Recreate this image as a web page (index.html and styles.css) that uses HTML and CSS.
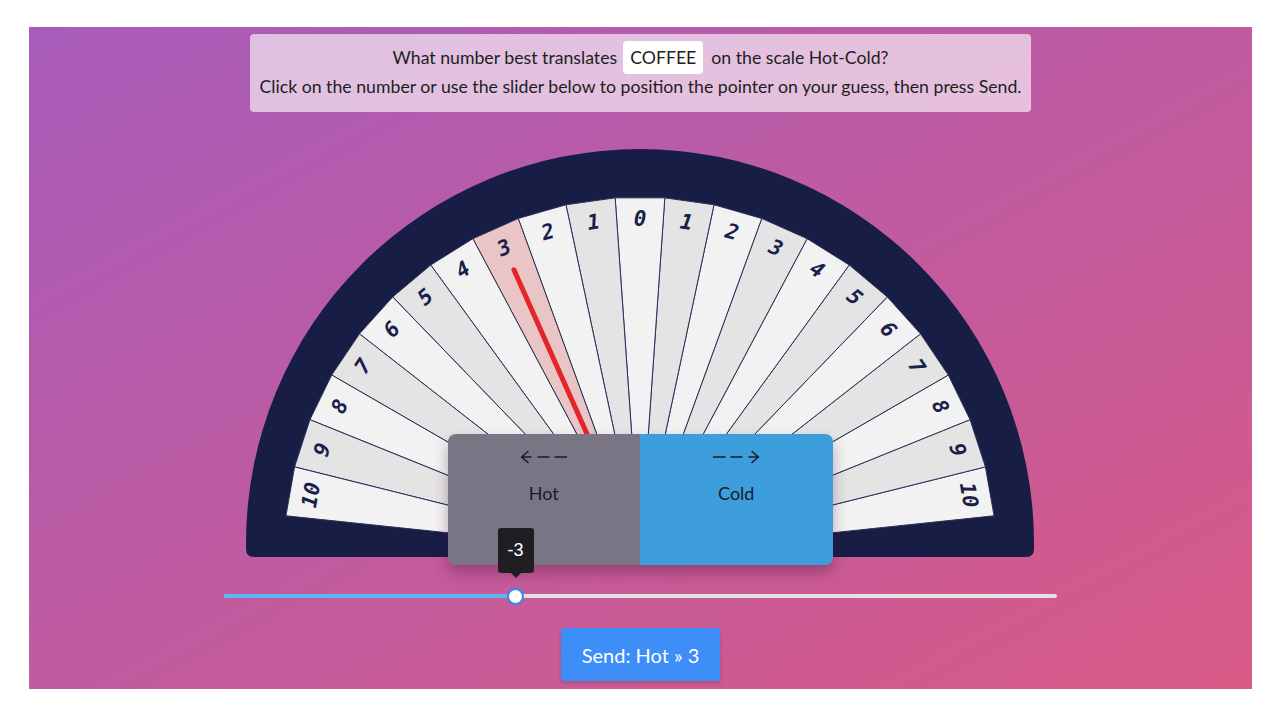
FILE: index.html
```html
<!DOCTYPE html>
<html lang="en">
<head>
<meta charset="utf-8">
<title>Hot-Cold scale</title>
<link rel="stylesheet" href="styles.css">
</head>
<body>
<div class="stage">
  <div class="prompt">
    <p class="line line-first"><span>What number best translates</span><span class="word">COFFEE</span><span>on the scale Hot-Cold?</span></p>
    <p class="line">Click on the number or use the slider below to position the pointer on your guess, then press Send.</p>
  </div>

  <div class="wheel">
    <svg class="dial" width="790" height="410" viewBox="0 0 790 410">
      <path class="rim" d="M0,395 A394,394 0 0 1 788,395 L788,401 Q788,409 780,409 L8,409 Q0,409 0,401 Z"/>
      <g class="wedges">
        <polygon class="w-light" points="394,405 748.05,367.79 739.43,318.88"/>
        <polygon class="w-dark" points="394,405 739.43,318.88 724.08,271.64"/>
        <polygon class="w-light" points="394,405 724.08,271.64 702.31,227"/>
        <polygon class="w-dark" points="394,405 702.31,227 674.53,185.83"/>
        <polygon class="w-light" points="394,405 674.53,185.83 641.30,148.91"/>
        <polygon class="w-dark" points="394,405 641.30,148.91 603.25,116.99"/>
        <polygon class="w-light" points="394,405 603.25,116.99 561.13,90.67"/>
        <polygon class="w-dark" points="394,405 561.13,90.67 515.76,70.47"/>
        <polygon class="w-light" points="394,405 515.76,70.47 468.02,56.78"/>
        <polygon class="w-dark" points="394,405 468.02,56.78 418.83,49.87"/>
        <polygon class="w-light" points="394,405 418.83,49.87 369.17,49.87"/>
        <polygon class="w-dark" points="394,405 369.17,49.87 319.98,56.78"/>
        <polygon class="w-light" points="394,405 319.98,56.78 272.24,70.47"/>
        <polygon class="w-pick" points="394,405 272.24,70.47 226.87,90.67"/>
        <polygon class="w-light" points="394,405 226.87,90.67 184.75,116.99"/>
        <polygon class="w-dark" points="394,405 184.75,116.99 146.70,148.91"/>
        <polygon class="w-light" points="394,405 146.70,148.91 113.47,185.83"/>
        <polygon class="w-dark" points="394,405 113.47,185.83 85.69,227"/>
        <polygon class="w-light" points="394,405 85.69,227 63.92,271.64"/>
        <polygon class="w-dark" points="394,405 63.92,271.64 48.57,318.88"/>
        <polygon class="w-light" points="394,405 48.57,318.88 39.95,367.79"/>
      </g>
      <g class="nums">
        <text x="722.93" y="347" transform="rotate(80 722.93 347)">10</text>
        <text x="711.65" y="301.79" transform="rotate(72 711.65 301.79)">9</text>
        <text x="694.20" y="258.58" transform="rotate(64 694.20 258.58)">8</text>
        <text x="670.90" y="218.23" transform="rotate(56 670.90 218.23)">7</text>
        <text x="642.21" y="181.51" transform="rotate(48 642.21 181.51)">6</text>
        <text x="608.69" y="149.14" transform="rotate(40 608.69 149.14)">5</text>
        <text x="570.99" y="121.75" transform="rotate(32 570.99 121.75)">4</text>
        <text x="529.85" y="99.87" transform="rotate(24 529.85 99.87)">3</text>
        <text x="486.06" y="83.94" transform="rotate(16 486.06 83.94)">2</text>
        <text x="440.48" y="74.25" transform="rotate(8 440.48 74.25)">1</text>
        <text x="394" y="71">0</text>
        <text x="347.52" y="74.25" transform="rotate(-8 347.52 74.25)">1</text>
        <text x="301.94" y="83.94" transform="rotate(-16 301.94 83.94)">2</text>
        <text x="258.15" y="99.87" transform="rotate(-24 258.15 99.87)">3</text>
        <text x="217.01" y="121.75" transform="rotate(-32 217.01 121.75)">4</text>
        <text x="179.31" y="149.14" transform="rotate(-40 179.31 149.14)">5</text>
        <text x="145.79" y="181.51" transform="rotate(-48 145.79 181.51)">6</text>
        <text x="117.10" y="218.23" transform="rotate(-56 117.10 218.23)">7</text>
        <text x="93.80" y="258.58" transform="rotate(-64 93.80 258.58)">8</text>
        <text x="76.35" y="301.79" transform="rotate(-72 76.35 301.79)">9</text>
        <text x="65.07" y="347" transform="rotate(-80 65.07 347)">10</text>
      </g>
      <line class="needle" x1="394" y1="405" x2="267.91" y2="121.8"/>
    </svg>

    <div class="poles">
      <div class="pole pole-hot">
        <svg class="arrow" width="48" height="14" viewBox="0 0 48 14">
          <path d="M8 1.5 L1.5 7 L8 12.5 M1.5 7 H11 M18 7 H29 M35 7 H46.5"/>
        </svg>
        <span class="pole-label">Hot</span>
      </div>
      <div class="pole pole-cold">
        <svg class="arrow" width="48" height="14" viewBox="0 0 48 14">
          <path d="M1.5 7 H13 M19 7 H30 M37 7 H46.5 M40 1.5 L46.5 7 L40 12.5"/>
        </svg>
        <span class="pole-label">Cold</span>
      </div>
    </div>
  </div>

  <div class="slider">
    <div class="track"><div class="fill" style="width:35%"></div></div>
    <div class="thumb" style="left:35%"></div>
    <div class="tip" style="left:35%">-3</div>
  </div>

  <button class="send" type="button">Send: Hot » 3</button>
</div>
</body>
</html>
```

FILE: styles.css
```css
* {
  box-sizing: border-box;
}

body {
  margin: 0;
  background: #ffffff;
  font-family: Lato, "Open Sans", sans-serif;
}

.stage {
  margin: 27px 0 0 29px;
  width: 1223px;
  height: 662px;
  background: linear-gradient(to bottom right, #a85cba, #d85a86);
  display: flex;
  flex-direction: column;
  align-items: center;
}

.prompt {
  margin-top: 7px;
  width: 781px;
  height: 78px;
  padding-top: 7px;
  background: rgba(255, 255, 255, 0.62);
  border-radius: 4px;
  display: flex;
  flex-direction: column;
  align-items: center;
}

.line {
  margin: 0;
  font-size: 17.7px;
  line-height: 26px;
  color: #1e1e22;
}

.line-first {
  display: flex;
  align-items: center;
  height: 33px;
}

.word {
  background: #ffffff;
  border-radius: 4px;
  padding: 0 7px;
  margin: 0 8px 0 6px;
  line-height: 33px;
  font-size: 17.7px;
}

.wheel {
  position: relative;
  width: 790px;
  height: 410px;
  margin-top: 36px;
}

.dial {
  display: block;
}

.rim {
  fill: #181d46;
}

.wedges polygon {
  stroke: #2c3058;
  stroke-width: 1;
}

.w-light {
  fill: #f2f2f2;
}

.w-dark {
  fill: #e4e4e4;
}

.w-pick {
  fill: #e9c5c5;
}

.nums text {
  font-family: "DejaVu Sans Mono", "Liberation Mono", monospace;
  font-weight: bold;
  font-style: italic;
  font-size: 21px;
  fill: #1b1f4a;
  text-anchor: middle;
  dominant-baseline: central;
}

.needle {
  stroke: #e3262a;
  stroke-width: 5;
  stroke-linecap: round;
}

.poles {
  position: absolute;
  left: 50%;
  top: 286px;
  width: 385px;
  height: 131px;
  margin-left: -193px;
  display: flex;
  border-radius: 8px;
  overflow: hidden;
  box-shadow: 0 8px 14px rgba(70, 20, 60, 0.35);
  z-index: 1;
}

.pole {
  flex: 1;
  display: flex;
  flex-direction: column;
  align-items: center;
  padding-top: 16px;
  color: #1b1b26;
}

.pole-hot {
  background: #797585;
}

.pole-cold {
  background: #3e9edc;
}

.arrow {
  display: block;
}

.arrow path {
  fill: none;
  stroke: #1b1b26;
  stroke-width: 1.6;
  stroke-linecap: round;
  stroke-linejoin: round;
}

.pole-label {
  margin-top: 18px;
  font-size: 18px;
  line-height: 22px;
}

.slider {
  position: relative;
  width: 833px;
  height: 20px;
  margin-top: 28px;
}

.track {
  position: absolute;
  left: 0;
  right: 0;
  top: 8px;
  height: 4px;
  background: #e4e2e4;
  border-radius: 2px;
}

.fill {
  height: 100%;
  background: #5cb6f2;
  border-radius: 2px;
}

.thumb {
  position: absolute;
  top: 2px;
  width: 17px;
  height: 17px;
  margin-left: -8.5px;
  border-radius: 50%;
  background: #ffffff;
  border: 2.5px solid #2d8cf0;
}

.tip {
  position: absolute;
  bottom: 33px;
  width: 36px;
  height: 45px;
  margin-left: -18px;
  background: #211e23;
  color: #ffffff;
  border-radius: 3px;
  font-family: "Liberation Sans", Arial, sans-serif;
  font-size: 18px;
  display: flex;
  align-items: center;
  justify-content: center;
  z-index: 2;
}

.tip::after {
  content: "";
  position: absolute;
  left: 50%;
  bottom: -5px;
  margin-left: -5px;
  border-left: 5px solid transparent;
  border-right: 5px solid transparent;
  border-top: 5px solid #211e23;
}

.send {
  margin-top: 22px;
  width: 159px;
  height: 53px;
  background: #3d8ef7;
  color: #ffffff;
  border: none;
  border-radius: 3px;
  font-family: Lato, "Open Sans", sans-serif;
  font-size: 20px;
  box-shadow: 0 2px 4px rgba(0, 0, 0, 0.15);
}
```
